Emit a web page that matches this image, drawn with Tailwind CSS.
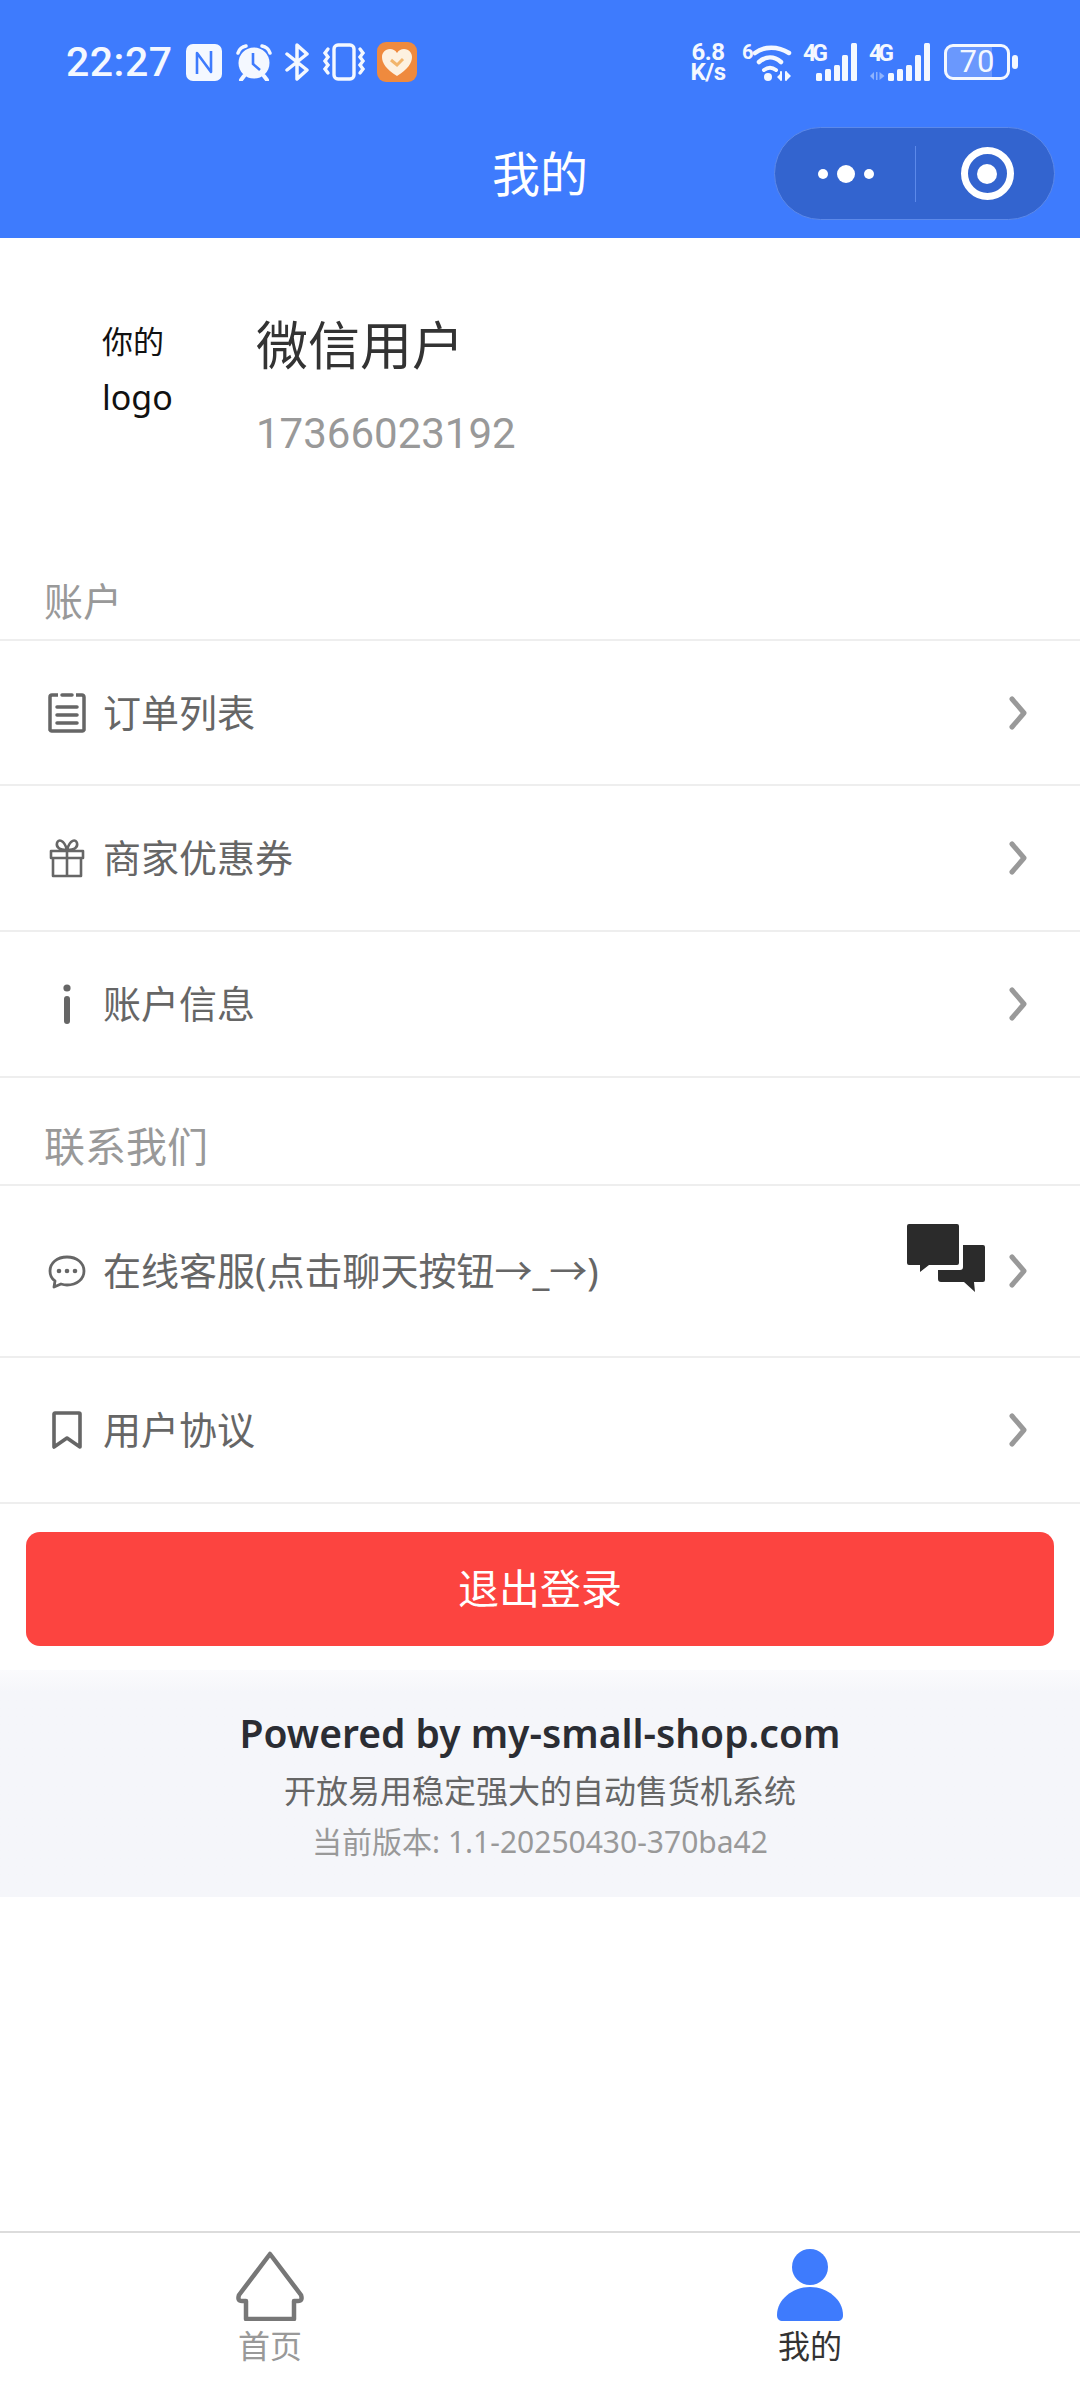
<!DOCTYPE html>
<html lang="zh">
<head>
<meta charset="utf-8">
<script src="https://cdn.jsdelivr.net/npm/@tailwindcss/browser@4"></script>
</head>
<body class="bg-white">
<div class="w-[1080px] h-[2382px] flex flex-col overflow-hidden font-['Noto_Sans','Noto_Sans_CJK_SC',sans-serif]">
  <!-- header -->
  <header class="relative h-[238px] shrink-0 bg-[#3e7bfd] text-[#f4f8ff]">
    <div class="flex items-center h-[40px] pt-[42px] box-content pl-[66px] pr-[62px]">
      <span class="font-['Roboto',sans-serif] font-medium text-[41px] leading-[40px] tracking-[0.5px] w-[120px]">22:27</span>
      <svg class="w-[36px] h-[37px]" viewBox="0 0 36 37"><rect width="36" height="37" rx="7" fill="#f4f8ff"/><path d="M11 30V9l14 19V7" fill="none" stroke="#3e7bfd" stroke-width="2.6" stroke-linejoin="round"/></svg>
      <svg class="w-[38px] h-[38px] ml-[13px]" viewBox="0 0 38 38"><circle cx="19" cy="20" r="15.5" fill="#f4f8ff"/><path d="M18 10v11l7 6" fill="none" stroke="#3e7bfd" stroke-width="2.6"/><path d="M3 10 Q5 4 11 3M35 10 Q33 4 27 3" fill="none" stroke="#f4f8ff" stroke-width="3.5" stroke-linecap="round"/><path d="M9 33l-3 4M29 33l3 4" stroke="#f4f8ff" stroke-width="4" stroke-linecap="round"/></svg>
      <svg class="w-[24px] h-[38px] ml-[12px]" viewBox="0 0 24 38" fill="none" stroke="#f4f8ff" stroke-width="3.5" stroke-linejoin="round" stroke-linecap="round"><path d="M2 11l20 16-10 9V2l10 9L2 27"/></svg>
      <svg class="w-[44px] h-[38px] ml-[13px]" viewBox="0 0 44 38" fill="none" stroke="#f4f8ff" stroke-width="3.4"><rect x="12" y="2" width="20" height="34" rx="4"/><path d="M6 6l-3 4 3 4-3 4 3 4-3 4 3 4M38 6l3 4-3 4 3 4-3 4 3 4-3 4" stroke-linecap="round"/></svg>
      <svg class="w-[40px] h-[40px] ml-[11px]" viewBox="0 0 40 40"><rect width="40" height="40" rx="9" fill="#ef8a3e"/><path d="M20 34C9 27 5 21 5 15c0-4 3-8 8-8 3 0 5 1 7 4 2-3 4-4 7-4 5 0 8 4 8 8 0 6-4 12-15 19z" fill="#fdf1e0"/><path d="M14 18l6 5 6-6" fill="none" stroke="#f2b56b" stroke-width="3"/></svg>
      <div class="ml-auto flex items-center">
        <div class="w-[40px] flex flex-col items-center font-['Roboto',sans-serif] font-bold text-[24px] leading-[20px] tracking-[-0.5px]"><span>6.8</span><span>K/s</span></div>
        <svg class="w-[51px] h-[42px] ml-[14px] -mt-[4px]" viewBox="0 -4 51 42" fill="none" stroke="#f4f8ff" stroke-linecap="round"><path d="M13 10C22 3 36 3 47 10" stroke-width="4.5"/><path d="M17 19c7-6 15-6 22 0" stroke-width="4.5"/><path d="M22 27c4-3 8-3 12 0" stroke-width="4"/><circle cx="26" cy="34" r="4" fill="#f4f8ff" stroke="none"/><path d="M39 29v8M44 29v8" stroke-width="2"/><path d="M38 31l-3 3 3 3zM45 29l4 4-4 4z" fill="#f4f8ff" stroke="none"/><text x="0" y="16" fill="#f4f8ff" stroke="none" font-family="Roboto" font-weight="700" font-size="20">6</text></svg>
        <svg class="w-[54px] h-[42px] ml-[10px] -mt-[4px]" viewBox="0 -4 54 42"><text x="0" y="18" fill="#f4f8ff" font-family="Roboto" font-weight="700" font-size="23" textLength="25">4G</text><rect x="13" y="30" width="6" height="8" rx="1.5" fill="#f4f8ff"/><rect x="22" y="26" width="6" height="12" rx="1.5" fill="#f4f8ff"/><rect x="31" y="22" width="6" height="16" rx="1.5" fill="#f4f8ff"/><rect x="39" y="12" width="6" height="26" rx="1.5" fill="#f4f8ff"/><rect x="48" y="0" width="6" height="38" rx="1.5" fill="#f4f8ff"/></svg>
        <svg class="w-[61px] h-[42px] ml-[12px] -mt-[4px]" viewBox="0 -4 61 42"><text x="0" y="18" fill="#f4f8ff" font-family="Roboto" font-weight="700" font-size="23" textLength="25">4G</text><path d="M5 29l-4 4 4 4zM7 29v8h1.500v-8zM10.500 29v8l5-4z" fill="#8fb3fd"/><rect x="19" y="30" width="6" height="8" rx="1.5" fill="#f4f8ff"/><rect x="28" y="26" width="6" height="12" rx="1.5" fill="#f4f8ff"/><rect x="37" y="22" width="6" height="16" rx="1.5" fill="#f4f8ff"/><rect x="46" y="12" width="6" height="26" rx="1.5" fill="#f4f8ff"/><rect x="55" y="0" width="6" height="38" rx="1.5" fill="#f4f8ff"/></svg>
        <div class="ml-[14px] w-[66px] h-[36px] border-[3px] border-[#f4f8ff] rounded-[9px] bg-[linear-gradient(to_right,#6a98fd_75%,transparent_75%)] flex items-center justify-center font-['Roboto',sans-serif] text-[31px] leading-[30px]">70</div>
        <div class="ml-[2px] w-[6px] h-[14px] rounded-full bg-[#f4f8ff]"></div>
      </div>
    </div>
    <h1 class="absolute left-0 right-0 top-[143px] text-center text-[48px] leading-[62px] font-normal text-white">我的</h1>
    <div class="absolute left-[774px] top-[127px] w-[281px] h-[93px] rounded-full bg-[#3364cf] border border-[#5c89ea] flex items-center">
      <div class="w-[140px] flex items-center justify-center gap-[9px] pl-[1px]">
        <span class="w-[10px] h-[10px] rounded-full bg-white"></span>
        <span class="w-[18px] h-[18px] rounded-full bg-white"></span>
        <span class="w-[10px] h-[10px] rounded-full bg-white"></span>
      </div>
      <div class="w-px h-[56px] bg-[#5c89ea]"></div>
      <div class="flex-1 flex items-center justify-center pl-[4px]">
        <div class="w-[53px] h-[53px] rounded-full border-[7px] border-white flex items-center justify-center">
          <div class="w-[20px] h-[20px] rounded-full bg-white"></div>
        </div>
      </div>
    </div>
  </header>

  <!-- profile -->
  <section class="h-[330px] shrink-0 flex pl-[102px] pt-[75px]">
    <div class="w-[154px] text-[31px] leading-[56px] text-[#111]">你的<br><span class="text-[34px]">logo</span></div>
    <div>
      <div class="text-[52px] leading-[64px] text-[#333]">微信用户</div>
      <div class="mt-[32px] font-['Roboto',sans-serif] text-[42px] leading-[50px] text-[#999]">17366023192</div>
    </div>
  </section>

  <!-- account -->
  <div class="h-[73px] shrink-0 pl-[44px] pt-[5px] border-b-2 border-[#eeeeee] text-[39px] leading-[56px] text-[#999]">账户</div>
  <a class="h-[145px] shrink-0 flex items-center pl-[48px] pr-[53px] border-b-2 border-[#eeeeee]">
    <svg class="w-[38px] h-[40px]" viewBox="0 0 38 40" fill="none" stroke="#666" stroke-width="3.5" stroke-linejoin="round"><path d="M10 2H4a2 2 0 0 0-2 2v33a2 2 0 0 0 2 1h30a2 2 0 0 0 2-1V4a2 2 0 0 0-2-2h-6"/><path d="M14 2h10M9 14h20M9 22h20M9 30h20" stroke-linecap="round"/></svg>
    <span class="ml-[17px] -mt-[2px] text-[38px] leading-[50px] text-[#666]">订单列表</span>
    <svg class="ml-auto w-[18px] h-[34px]" viewBox="0 0 18 34" fill="none" stroke="#999" stroke-width="5" stroke-linecap="round" stroke-linejoin="round"><path d="M3 3l12 14L3 31"/></svg>
  </a>
  <a class="h-[146px] shrink-0 flex items-center pl-[48px] pr-[53px] border-b-2 border-[#eeeeee]">
    <svg class="w-[38px] h-[40px]" viewBox="0 0 38 40" fill="none" stroke="#666" stroke-width="2.6"><path d="M3 13h32v7H3zM5 20h28v18H5zM19 13v25M19 12c-8 0-11-3-10-7 1-4 7-4 10 7zM19 12c8 0 11-3 10-7-1-4-7-4-10 7z" stroke-linejoin="round"/></svg>
    <span class="ml-[17px] -mt-[2px] text-[38px] leading-[50px] text-[#666]">商家优惠券</span>
    <svg class="ml-auto w-[18px] h-[34px]" viewBox="0 0 18 34" fill="none" stroke="#999" stroke-width="5" stroke-linecap="round" stroke-linejoin="round"><path d="M3 3l12 14L3 31"/></svg>
  </a>
  <a class="h-[146px] shrink-0 flex items-center pl-[48px] pr-[53px] border-b-2 border-[#eeeeee]">
    <svg class="w-[38px] h-[40px]" viewBox="0 0 38 40" fill="#666"><circle cx="19" cy="4" r="3.6"/><rect x="16" y="12" width="6" height="28" rx="3"/></svg>
    <span class="ml-[17px] -mt-[2px] text-[38px] leading-[50px] text-[#666]">账户信息</span>
    <svg class="ml-auto w-[18px] h-[34px]" viewBox="0 0 18 34" fill="none" stroke="#999" stroke-width="5" stroke-linecap="round" stroke-linejoin="round"><path d="M3 3l12 14L3 31"/></svg>
  </a>

  <!-- contact -->
  <div class="h-[108px] shrink-0 pl-[44px] pt-[40px] border-b-2 border-[#eeeeee] text-[41px] leading-[56px] text-[#999]">联系我们</div>
  <a class="h-[172px] shrink-0 flex items-center pl-[48px] pr-[53px] border-b-2 border-[#eeeeee]">
    <svg class="w-[38px] h-[40px]" viewBox="0 0 38 40" fill="none" stroke="#666" stroke-width="2.8"><path d="M19 6C9 6 2 12 2 20c0 4 2 8 5 10l-1 6 7-3c2 .6 4 1 6 1 10 0 17-6 17-14S29 6 19 6z" stroke-linejoin="round"/><circle cx="11" cy="20" r="2.3" fill="#666" stroke="none"/><circle cx="19" cy="20" r="2.3" fill="#666" stroke="none"/><circle cx="27" cy="20" r="2.3" fill="#666" stroke="none"/></svg>
    <span class="ml-[17px] -mt-[2px] text-[38px] leading-[50px] text-[#666]">在线客服(点击聊天按钮→_→)</span>
    <svg class="ml-auto mb-[26px] w-[78px] h-[68px]" viewBox="0 0 78 68" fill="#2b2b2b"><path d="M2 0h48a2 2 0 0 1 2 2v37a2 2 0 0 1-2 2H22l-9 7v-7H2a2 2 0 0 1-2-2V2a2 2 0 0 1 2-2z"/><path d="M56 21h20a2 2 0 0 1 2 2v33a2 2 0 0 1-2 2h-9l1 10-11-10H34a3 3 0 0 1-3-3v-9h22a3 3 0 0 0 3-3z"/></svg>
    <svg class="ml-[24px] w-[18px] h-[34px]" viewBox="0 0 18 34" fill="none" stroke="#999" stroke-width="5" stroke-linecap="round" stroke-linejoin="round"><path d="M3 3l12 14L3 31"/></svg>
  </a>
  <a class="h-[146px] shrink-0 flex items-center pl-[48px] pr-[53px] border-b-2 border-[#eeeeee]">
    <svg class="w-[38px] h-[40px]" viewBox="0 0 38 40" fill="none" stroke="#666" stroke-width="3.6" stroke-linejoin="round"><path d="M7 3h24a1 1 0 0 1 1 1v33L19 28 6 37V4a1 1 0 0 1 1-1z"/></svg>
    <span class="ml-[17px] -mt-[2px] text-[38px] leading-[50px] text-[#666]">用户协议</span>
    <svg class="ml-auto w-[18px] h-[34px]" viewBox="0 0 18 34" fill="none" stroke="#999" stroke-width="5" stroke-linecap="round" stroke-linejoin="round"><path d="M3 3l12 14L3 31"/></svg>
  </a>

  <!-- logout -->
  <div class="mt-[28px] mx-[26px] h-[114px] shrink-0 rounded-[14px] bg-[#fc4440] flex items-center justify-center text-[41px] text-white">退出登录</div>

  <!-- footer -->
  <footer class="mt-[24px] h-[227px] shrink-0 bg-linear-to-b from-[#fbfbfd] to-[#f5f6fa] to-[10%] flex flex-col items-center pt-[40px]">
    <div class="font-semibold text-[39px] leading-[46px] text-[#2b2d33]">Powered by my-small-shop.com</div>
    <div class="mt-[13px] text-[32px] leading-[44px] text-[#666]">开放易用稳定强大的自动售货机系统</div>
    <div class="mt-[9px] text-[30px] leading-[40px] text-[#999]">当前版本: 1.1-20250430-370ba42</div>
  </footer>

  <div class="flex-1"></div>

  <!-- tabbar -->
  <nav class="h-[151px] shrink-0 border-t-2 border-[#dcdcdc] flex">
    <div class="w-[540px] flex flex-col items-center pt-[18px]">
      <svg class="w-[70px] h-[70px]" viewBox="0 0 70 70" fill="none" stroke="#777" stroke-width="4.5" stroke-linejoin="round"><path d="M35 3 L66 44 Q68 50 63 50 H59 V68 H11 V50 H7 Q2 50 4 44 Z"/></svg>
      <span class="mt-[5px] text-[32px] leading-[40px] text-[#999]">首页</span>
    </div>
    <div class="w-[540px] flex flex-col items-center pt-[16px]">
      <svg class="w-[66px] h-[72px]" viewBox="0 0 66 72" fill="#3e7bfd"><ellipse cx="33" cy="18" rx="18" ry="18"/><path d="M33 38c-18 0-33 13-33 28 0 4 2 6 6 6h54c4 0 6-2 6-6 0-15-15-28-33-28z"/></svg>
      <span class="mt-[5px] text-[32px] leading-[40px] text-[#333]">我的</span>
    </div>
  </nav>
</div>
</body>
</html>
